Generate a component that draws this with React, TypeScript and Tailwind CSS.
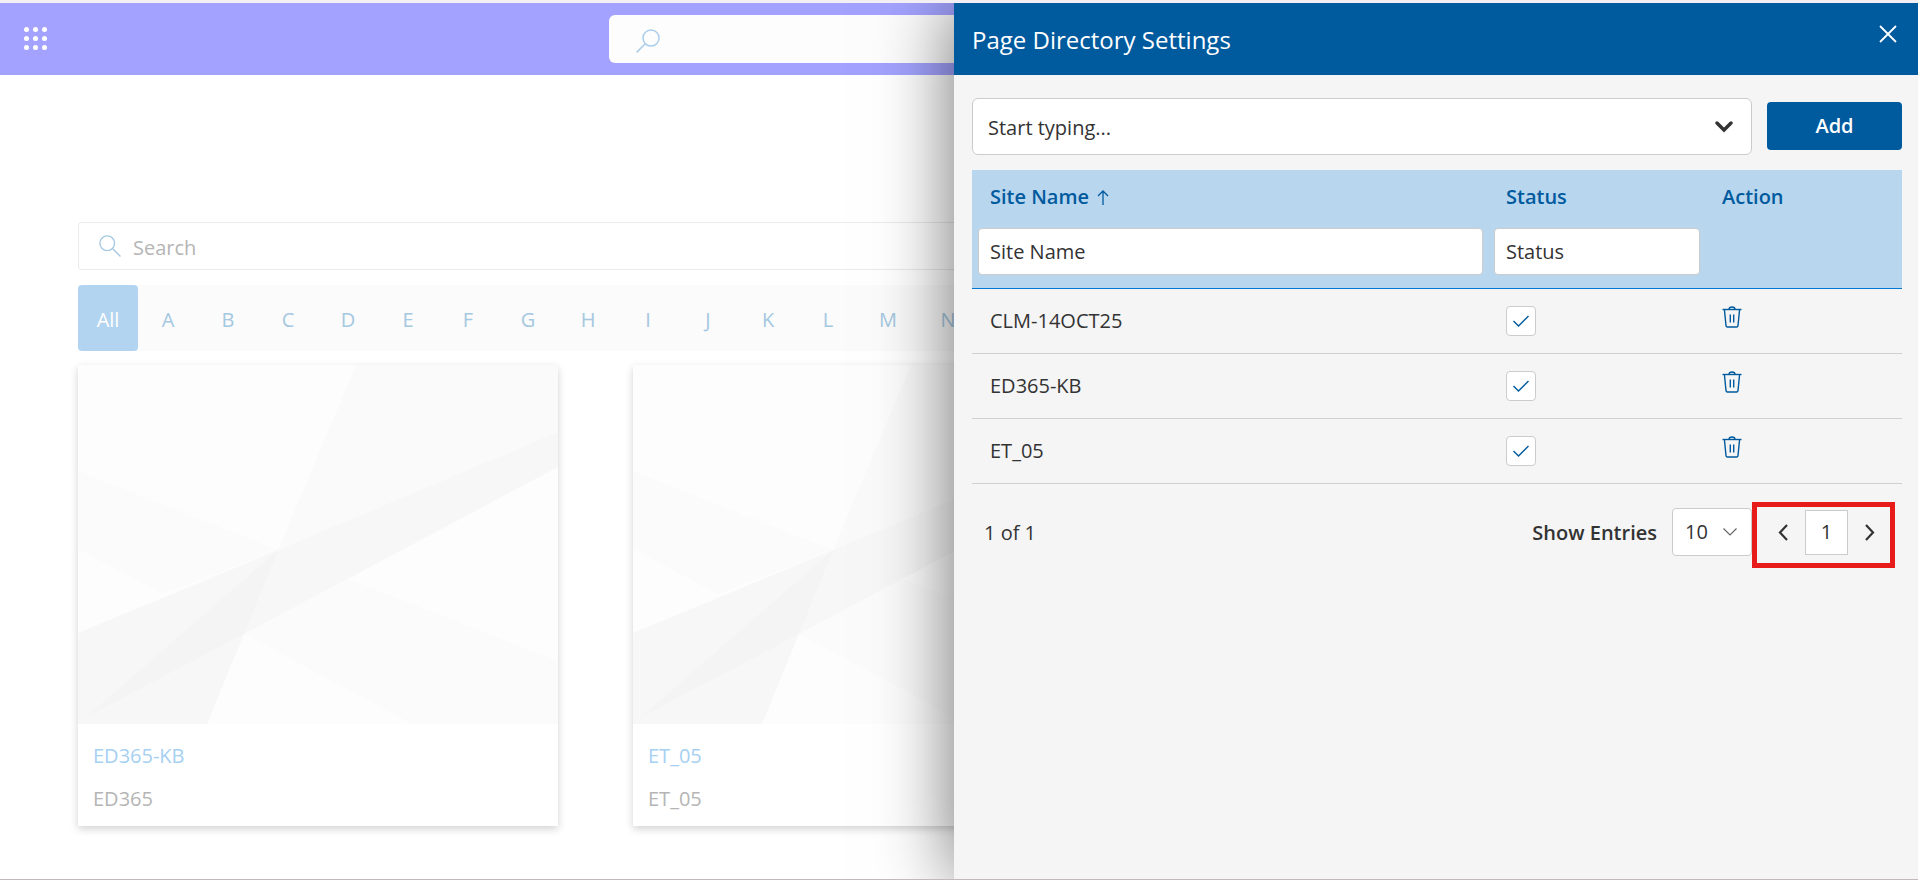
import React from "react";

type IconProps = { className?: string };

const SearchIcon = ({ className }: IconProps) => (
  <svg viewBox="0 0 24 24" fill="none" stroke="currentColor" strokeWidth="1.5" className={className} aria-hidden="true">
    <circle cx="9" cy="9" r="8" />
    <path d="M14.7 14.7 L23.4 23.4" />
  </svg>
);

const TrashIcon = ({ className }: IconProps) => (
  <svg viewBox="0 0 20 22" fill="none" stroke="currentColor" strokeWidth="1.4" className={className} aria-hidden="true">
    <path d="M0.5 3.5 H19.5" />
    <path d="M7 3.5 Q7 1 10 1 Q13 1 13 3.5" />
    <path d="M2.4 3.5 L4 19.6 Q4.2 21 5.4 21 H14.6 Q15.8 21 16 19.6 L17.6 3.5" />
    <path d="M8.3 8.5 V16.5 M11.7 8.5 V16.5" />
  </svg>
);

const Artwork = () => (
  <svg viewBox="0 0 480 359" preserveAspectRatio="none" className="block h-[359px] w-full" aria-hidden="true">
    <rect width="480" height="359" fill="#fdfdfd" />
    <path d="M278 0 H480 V67 L200 185 Z" fill="#fafafa" />
    <path d="M0 106 L200 185 L85 229 L0 184 Z" fill="#fbfbfb" />
    <path d="M270 214 L480 296 V359 H334 L166 269 Z" fill="#fbfbfb" />
    <path d="M0 268 L200 185 L480 67 V102 L166 269 L129 359 H0 Z" fill="#f7f7f7" />
    <path d="M8 352 L200 185 L166 269 Z" fill="#f4f4f4" />
  </svg>
);

const letters = ["A", "B", "C", "D", "E", "F", "G", "H", "I", "J", "K", "L", "M", "N"];

const cards = [
  { title: "ED365-KB", subtitle: "ED365" },
  { title: "ET_05", subtitle: "ET_05" },
];

const sites = ["CLM-14OCT25", "ED365-KB", "ET_05"];

function Directory() {
  return (
    <div className="min-w-0 flex-1 overflow-hidden bg-white">
      <header className="flex h-[72px] items-center bg-[#a3a3ff]">
        <button type="button" aria-label="App launcher" className="mb-0.5 ml-6 grid grid-cols-3 gap-1 text-white">
          {Array.from({ length: 9 }, (_, i) => (
            <span key={i} className="size-[5px] rounded-full bg-white" />
          ))}
        </button>
        <div className="ml-[562px] flex h-12 flex-1 items-center rounded-l-md bg-[#fdfdfd] pl-[27px] pt-1">
          <SearchIcon className="size-6 -scale-x-100 text-[#a9cdeb]" />
        </div>
      </header>
      <main className="pl-[78px] pt-[147px]">
        <label className="flex h-12 items-center rounded-l border border-r-0 border-[#ebebeb] pl-5 text-[#a5c8e1]">
          <SearchIcon className="size-[22px]" />
          <input
            type="text"
            aria-label="Search"
            placeholder="Search"
            className="ml-3 min-w-0 flex-1 bg-transparent pt-1 text-xl outline-none placeholder:text-[#b5b5b5]"
          />
        </label>
        <nav className="mt-[15px] flex h-[66px] bg-[#fbfbfb] text-xl text-[#a5c8e1]">
          <button type="button" className="w-[60px] shrink-0 rounded-sm bg-[#b3d4f0] pt-1 font-medium text-white">All</button>
          {letters.map((l) => (
            <button key={l} type="button" className="w-[60px] shrink-0 pt-1">{l}</button>
          ))}
        </nav>
        <div className="mt-[14px] flex gap-[75px]">
          {cards.map((c) => (
            <article key={c.title} className="w-[480px] shrink-0 bg-white shadow-[0_3px_8px_rgba(0,0,0,0.18)]">
              <Artwork />
              <div className="px-[15px] pb-[11px] pt-4 text-xl">
                <a href="#" className="block leading-8 text-[#a6d0f2]">{c.title}</a>
                <p className="mt-[11px] leading-8 text-[#b5b5b5]">{c.subtitle}</p>
              </div>
            </article>
          ))}
        </div>
      </main>
    </div>
  );
}

function SettingsPanel() {
  return (
    <aside className="relative w-[964px] shrink-0 bg-[#f5f5f5] text-[#333333] shadow-[0_0_72px_rgba(0,0,0,0.56)]">
      <header className="flex h-[72px] items-center justify-between bg-[#005a9e] pl-[18px] pr-[21px] text-white">
        <h1 className="pt-0.5 text-2xl">Page Directory Settings</h1>
        <button type="button" aria-label="Close" className="mb-2.5">
          <svg viewBox="0 0 18 18" className="size-[18px]" fill="none" stroke="currentColor" strokeWidth="1.8">
            <path d="M1 1 L17 17 M17 1 L1 17" />
          </svg>
        </button>
      </header>

      <section className="pl-[18px] pr-4 pt-[23px]">
        <div className="flex items-center gap-[15px]">
          <label className="flex h-[57px] flex-1 items-center rounded-md border border-[#cccccc] bg-white pl-[15px] pr-[18px]">
            <input
              type="text"
              aria-label="Site"
              placeholder="Start typing..."
              className="min-w-0 flex-1 bg-transparent pt-0.5 text-xl outline-none placeholder:text-[#333333]"
            />
            <svg viewBox="0 0 18 12" className="h-3 w-[18px]" fill="none" stroke="currentColor" strokeWidth="3.4" strokeLinecap="round" aria-hidden="true">
              <path d="M2 2 L9 9 L16 2" />
            </svg>
          </label>
          <button type="button" className="mb-0.5 h-12 w-[135px] rounded-sm bg-[#005a9e] text-xl font-semibold text-white">Add</button>
        </div>

        <table className="mt-[15px] w-full table-fixed border-collapse text-left text-xl">
          <colgroup>
            <col />
            <col className="w-[216px]" />
            <col className="w-[198px]" />
          </colgroup>
          <thead className="bg-[#b8d6ee] text-[#005a9e]">
            <tr className="h-[58px]">
              <th scope="col" className="px-[18px] pb-1 font-semibold">
                <span className="flex items-center gap-2">
                  Site Name
                  <svg viewBox="0 0 12 15" className="h-[15px] w-3" fill="none" stroke="currentColor" strokeWidth="1.3" aria-hidden="true">
                    <path d="M6 15 V1 M1 6 L6 1 L11 6" />
                  </svg>
                </span>
              </th>
              <th scope="col" className="px-[18px] pb-1 font-semibold">Status</th>
              <th scope="col" className="px-[18px] pb-1 font-semibold">Action</th>
            </tr>
            <tr className="h-[60px] border-b border-[#0078d4] align-top">
              <td className="pl-[6px] pr-[5px]">
                <input aria-label="Filter by site name" placeholder="Site Name" className="block h-[47px] w-full rounded-sm border border-[#cccccc] bg-white px-[11px] outline-none placeholder:text-[#333333]" />
              </td>
              <td className="pl-[6px] pr-1">
                <input aria-label="Filter by status" placeholder="Status" className="block h-[47px] w-full rounded-sm border border-[#cccccc] bg-white px-[11px] outline-none placeholder:text-[#333333]" />
              </td>
              <td />
            </tr>
          </thead>
          <tbody>
            {sites.map((s) => (
              <tr key={s} className="h-[65px] border-b border-[#d2cfd0]">
                <td className="px-[18px]">{s}</td>
                <td className="px-[18px]">
                  <label className="grid size-[30px] place-items-center">
                    <input type="checkbox" defaultChecked aria-label={`${s} active`} className="col-start-1 row-start-1 size-[30px] appearance-none rounded-sm border border-[#cccccc] bg-white" />
                    <svg viewBox="0 0 16 12" className="relative col-start-1 row-start-1 h-3 w-4 text-[#005a9e]" fill="none" stroke="currentColor" strokeWidth="1.4" aria-hidden="true">
                      <path d="M0.5 6 L5.5 11 L15.5 1" />
                    </svg>
                  </label>
                </td>
                <td className="px-[18px]">
                  <button type="button" aria-label={`Delete ${s}`} className="mb-2 block text-[#005a9e]">
                    <TrashIcon className="h-[22px] w-5" />
                  </button>
                </td>
              </tr>
            ))}
          </tbody>
        </table>

        <footer className="mt-[18px] flex items-center pl-3 pr-[7px] text-xl">
          <span className="mb-1 flex-1">1 of 1</span>
          <label htmlFor="entries" className="mb-1 mr-[15px] font-semibold">Show Entries</label>
          <div className="mb-1.5 grid items-center">
            <select id="entries" defaultValue="10" className="col-start-1 row-start-1 h-12 w-20 appearance-none rounded-sm border border-[#cccccc] bg-white pl-3">
              <option>10</option>
              <option>25</option>
            </select>
            <svg viewBox="0 0 14 8" className="pointer-events-none col-start-1 row-start-1 mr-[15px] h-2 w-[14px] justify-self-end" fill="none" stroke="#666666" strokeWidth="1.2" aria-hidden="true">
              <path d="M0.5 0.5 L7 7 L13.5 0.5" />
            </svg>
          </div>
          <nav aria-label="Pagination" className="flex h-[66px] w-[143px] items-start justify-center gap-[17px] border-[5px] border-[#e81b1b] pl-1.5 pt-[3px]">
            <button type="button" aria-label="Previous page" className="flex h-[45px] items-center">
              <svg viewBox="0 0 10 17" className="h-[17px] w-[10px]" fill="none" stroke="currentColor" strokeWidth="2.2">
                <path d="M9 1 L2 8.5 L9 16" />
              </svg>
            </button>
            <button type="button" aria-current="page" className="h-[45px] w-[43px] border border-[#cccccc] bg-white">1</button>
            <button type="button" aria-label="Next page" className="flex h-[45px] items-center">
              <svg viewBox="0 0 10 17" className="h-[17px] w-[10px]" fill="none" stroke="currentColor" strokeWidth="2.2">
                <path d="M1 1 L8 8.5 L1 16" />
              </svg>
            </button>
          </nav>
        </footer>
      </section>
    </aside>
  );
}

export default function App() {
  return (
    <div className="flex min-h-screen flex-col overflow-hidden border-b border-[#c4b8bd] bg-white font-['Open_Sans',sans-serif]">
      <div className="h-[3px] bg-[#f3eff5]" />
      <div className="flex flex-1 overflow-hidden">
        <Directory />
        <SettingsPanel />
      </div>
    </div>
  );
}
